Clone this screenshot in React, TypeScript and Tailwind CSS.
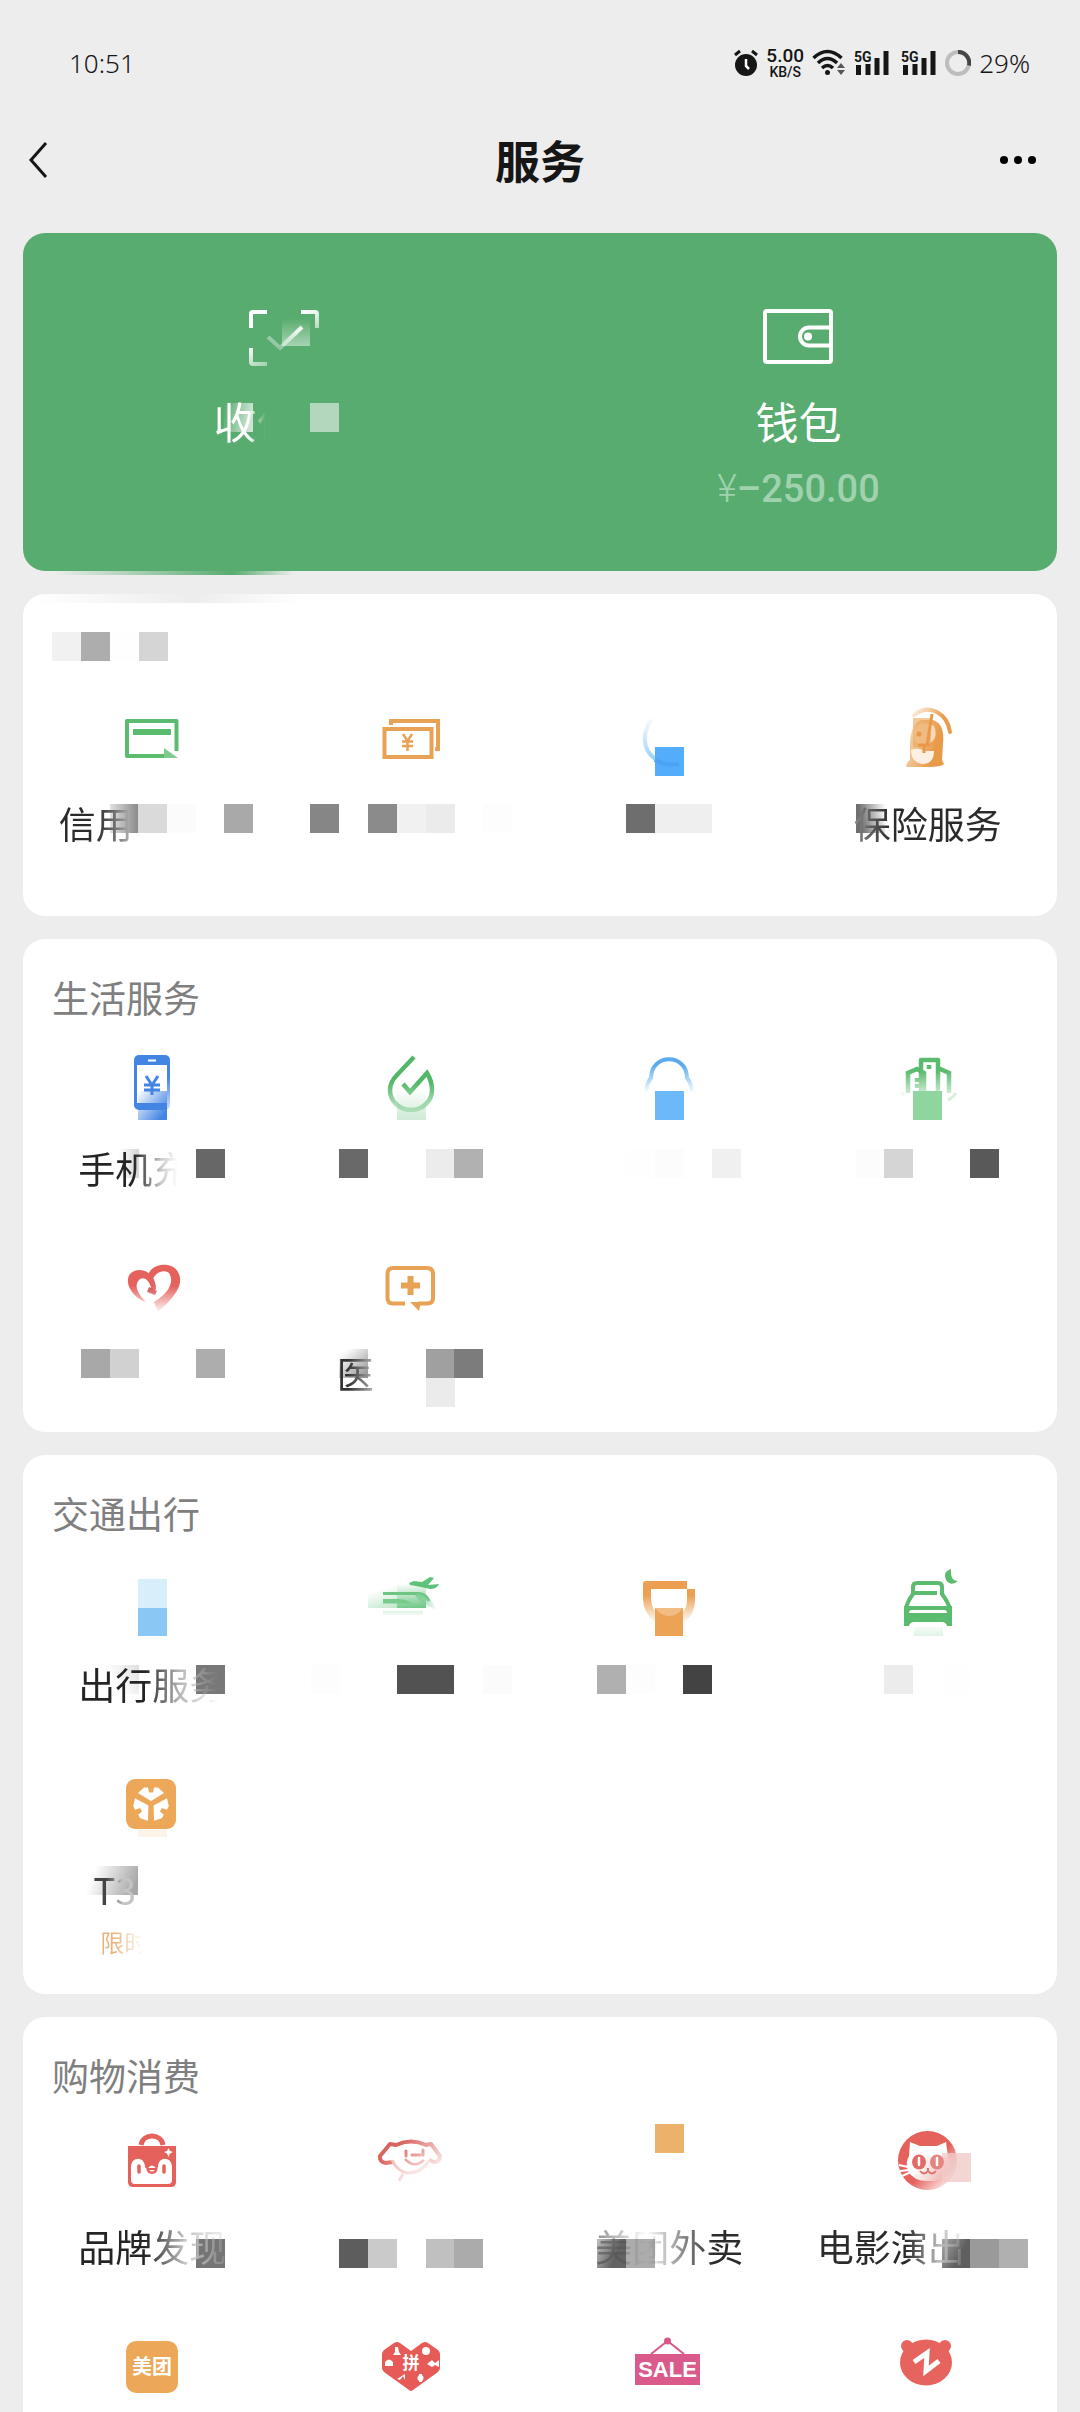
import type { ReactNode } from "react";

/**
 * Services page: status bar, title bar, the green pay/wallet card and the
 * service sections below it. Every icon is drawn in a 96x64 box whose x = 0 is
 * the middle of its column. The square mosaic patches use that same origin.
 */
const GREEN = "#5bbb6e";
const ORANGE = "#e8a256";
const RED = "#e5615c";
const BLUE = "#4385e3";

type Tile = { x: number; y?: number; w?: number; h?: number; color: string; fade?: [number, number, number, number] };

type Item = {
  id: string;
  name: string;
  icon: ReactNode;
  label?: string;
  /** Width of the label box, so that a cut label keeps its left edge. */
  box?: string;
  tone?: string;
  sub?: string;
  tiles?: Tile[];
};

type SectionData = { id: string; title?: string; pad: string; items: Item[] };

/** Fades its children from (x1, y1) to nothing at (x2, y2). */
function Fade({ id, line, children }: { id: string; line: [number, number, number, number]; children: ReactNode }) {
  const [x1, y1, x2, y2] = line;
  return (
    <>
      <linearGradient id={`${id}-g`} gradientUnits="userSpaceOnUse" x1={x1} y1={y1} x2={x2} y2={y2}>
        <stop offset="0" stopColor="#fff" />
        <stop offset="1" stopColor="#000" />
      </linearGradient>
      <mask id={id} maskUnits="userSpaceOnUse" x={-130} y={-20} width={260} height={120}>
        <rect x={-130} y={-20} width={260} height={120} fill={`url(#${id}-g)`} />
      </mask>
      <g mask={`url(#${id})`}>{children}</g>
    </>
  );
}

function Block({ x, y, w = 29, h = 29, color }: { x: number; y: number; w?: number; h?: number; color: string }) {
  return <rect x={x} y={y} width={w} height={h} fill={color} shapeRendering="crispEdges" />;
}

function Mosaic({ id, tiles }: { id: string; tiles: Tile[] }) {
  return (
    <svg
      className="absolute left-1/2 -translate-x-1/2 overflow-visible"
      width="258"
      height="48"
      viewBox="-129 0 258 48"
      aria-hidden="true"
    >
      {tiles.map((t, i) => {
        const block = <Block key={i} x={t.x} y={t.y ?? 3} w={t.w} h={t.h} color={t.color} />;
        return t.fade ? (
          <Fade key={i} id={`${id}-${i}`} line={t.fade}>
            {block}
          </Fade>
        ) : (
          block
        );
      })}
    </svg>
  );
}

/* ---------- icons ---------- */

const creditCard = (
  <>
    <path d="M24.5 45V15H-25V50H14" fill="none" stroke={GREEN} strokeWidth="4" strokeLinejoin="round" />
    <path d="M-19 26H19" stroke={GREEN} strokeWidth="6" />
    <path d="M12 42L26 52H12Z" fill="#7fcb8d" />
  </>
);

const cash = (
  <g fill="none" stroke={ORANGE}>
    <path d="M-20 19V15H27V43H24" strokeWidth="4" />
    <rect x="-26.500" y="23" width="47" height="28" strokeWidth="4" />
    <path d="M-8 28L-3.500 35L1 28M-3.500 35V45M-9 35.500H2M-9 40H2" strokeWidth="2.500" />
  </g>
);

const loan = (
  <>
    <Fade id="loan" line={[0, 70, -14, 8]}>
      <path d="M-18 13L-21 19Q-30 40 -14 53Q-4 60 10 58" fill="none" stroke="#6fbcf9" strokeWidth="4" />
    </Fade>
    <Block x={-14} y={41} color="#54adfa" />
    <path d="M-14 54Q-4 60 10 58" fill="none" stroke="#4aa3f4" strokeWidth="4" />
  </>
);

const insurance = (
  <>
    <Fade id="umbrella" line={[8, 20, -18, 0]}>
      <path d="M-14 9Q-3 0 9 6Q20 12 22 26" fill="none" stroke="#ea9c4c" strokeWidth="4" strokeLinecap="round" />
    </Fade>
    <Fade id="penguin" line={[8, 40, -44, 26]}>
      <path d="M5 14C15 17 16 28 15 38L14 54L16 58Q14 61 0 61H-22Q-22 57 -18 54V40Q-18 20 -8 14Z" fill="#e89a48" />
    </Fade>
    <path d="M-15 27C-14 16 0 16 6 20C10 30 7 37 -6 40Q-15 36 -15 27Z" fill="#f6d9ba" />
    <path d="M-17 44Q-9 41 -4 45H6Q6 58 -6 58Q-17 56 -17 44Z" fill="#fdf0e2" />
    <Block x={-15} y={12} w={18} color="#eda75b99" />
    <path d="M4 8L-1 40M-10 39H2M-4 40V47" fill="none" stroke="#e8994a" strokeWidth="3" />
    <circle cx="-9" cy="28" r="2.500" fill="#e8994a" />
  </>
);

const phone = (
  <>
    <rect x="-18" y="4" width="36" height="55" rx="5" fill={BLUE} />
    <rect x="-15" y="14" width="30" height="38" fill="#fff" />
    <path d="M-4 9.500H4" stroke="#fff" strokeWidth="2" />
    <path d="M-6 25L0 34L6 25M0 34V44M-8 34H8M-8 39H8" fill="none" stroke={BLUE} strokeWidth="3" />
    <Fade id="phone" line={[15, 60, -12, 38]}>
      <Block x={-14} y={40} color={BLUE} />
    </Fade>
    <Fade id="phone-side" line={[0, 70, 0, 26]}>
      <path d="M17 26V59" stroke="#fff" strokeWidth="4" />
    </Fade>
  </>
);

const utilities = (
  <>
    <Fade id="drop-tile" line={[0, 66, 0, 38]}>
      <Block x={-14} y={40} color="#d0ecd8" />
    </Fade>
    <Fade id="drop" line={[0, 32, 0, 74]}>
      <path
        d="M3 6L-14 24Q-21 31 -21 39A21 20 0 0 0 21 39Q21 30 16 22L-1 41L-8 33"
        fill="none"
        stroke="#53b869"
        strokeWidth="4.500"
      />
    </Fade>
  </>
);

const qcoin = (
  <>
    <Fade id="coin" line={[0, 14, 0, 42]}>
      <path d="M-23 42Q-22 31 -18 27C-18 2 18 2 18 27Q22 31 23 42" fill="none" stroke="#5aabee" strokeWidth="4" />
    </Fade>
    <Block x={-14} y={40} color="#6cb8f9" />
  </>
);

const city = (
  <>
    <Fade id="city" line={[0, 20, 0, 52]}>
      <g fill="none" stroke={GREEN} strokeWidth="4.500">
        <path d="M-7 46V9H10V46" strokeLinejoin="round" />
        <path d="M-20 42V22L-11 18L-4 22V44M10 17L21 22V42" />
        <path d="M1 14V18M-11 27V31M-11 33V37" />
      </g>
    </Fade>
    <Block x={-15} y={40} color="#8ed5a0" />
    <path d="M-27 41L-24 45" fill="none" stroke="#eef9f1" strokeWidth="3" />
    <path d="M20 49Q25 47 28 42" fill="none" stroke="#d8f0de" strokeWidth="3" />
  </>
);

const charity = (
  <Fade id="charity" line={[0, 30, 0, 58]}>
    <g fill={RED}>
      <path d="M-6 46C-26 39 -31 15 -13 14C-2 14 4 23 4 33L0 37C-1 25 -7 20 -12 23C-19 29 -14 38 -6 46Z" />
      <path d="M-4 19C0 7 20 5 26 16C34 30 18 45 6 56L2 46C16 38 23 26 17 17C12 13 3 15 -1 27Z" />
      <path d="M-3 31L5 35L3 39L-5 36Z" fill="#d04b4b" />
    </g>
  </Fade>
);

const medical = (
  <>
    <path
      d="M-6 47.500H-18Q-23.500 47.500 -23.500 42V18Q-23.500 12 -18 12H16Q22 12 22 18V42Q22 47.500 16 47.500H7"
      fill="none"
      stroke={ORANGE}
      strokeWidth="4"
    />
    <path d="M-1 46H10L8 55Z" fill={ORANGE} />
    <path d="M-10 29.500H9M-.500 20V39" stroke={ORANGE} strokeWidth="6" />
  </>
);

const travel = (
  <>
    <Block x={-14} y={12} color="#d9eefb" />
    <Block x={-14} y={41} h={28} color="#8ac7f4" />
  </>
);

const flight = (
  <>
    <Fade id="flight-a" line={[0, 48, -10, 16]}>
      <Block x={-43} y={12} color="#9edbae" />
    </Fade>
    <Fade id="flight-b" line={[0, 42, -2, 16]}>
      <Block x={-14} y={12} color="#6cc684" />
    </Fade>
    <path d="M-2 16L3 14L11 15L19 10L23 11L17 18L28 17Q26 22 19 22L10 20L-1 18Z" fill="#5fc27a" />
    <path d="M-28 26.500H8Q15 27 18 34" fill="none" stroke="#6dc583" strokeWidth="3" />
    <path d="M-28 32H-14Q-4 32 1 36.500H-28Z" fill="#78cb8c" />
    <Fade id="flight-d" line={[4, 30, 26, 42]}>
      <path d="M4 28Q10 36 15 38L27 44Q18 28 8 26Z" fill="#7ccc90" />
    </Fade>
    <Fade id="flight-c" line={[0, 38, 0, 50]}>
      <path d="M-28 46H12" stroke="#bfe6c9" strokeWidth="4" />
    </Fade>
  </>
);

const ticket = (
  <>
    <Fade id="ticket" line={[0, 28, 0, 56]}>
      <path d="M-22 22V32Q-22 44 -10 54M22 22V34Q22 44 12 54" fill="none" stroke="#eb9f50" strokeWidth="8" />
    </Fade>
    <path d="M-26 22V17Q-26 14 -23 14H18V22Z" fill="#ec9f50" />
    <Block x={-14} y={41} w={28} h={28} color="#eca355" />
    <path d="M-14 41H14Q8 49 0 49T-14 41Z" fill="#f1bd85" />
  </>
);

const hotel = (
  <>
    <path d="M23 2Q14 5 18 13Q23 20 30 14Q22 14 23 2Z" fill={GREEN} />
    <path
      d="M-22 42Q-21 35 -15 27V20Q-15 16 -11 16H10Q14 16 14 20V27Q20 35 22 42M-15 26H9"
      fill="none"
      stroke={GREEN}
      strokeWidth="4"
    />
    <path
      d="M-24 39H24V59H19Q18 55 14 55H-14Q-18 55 -19 59H-24ZM-19 46H19Q19 43 16 43H-16Q-19 43 -19 46Z"
      fill={GREEN}
      fillRule="evenodd"
    />
    <Fade id="hotel" line={[0, 76, 0, 56]}>
      <Block x={-14} y={60} h={9} color="#cfeeda" />
    </Fade>
  </>
);

const petal = "M-1 29L-14 21L-8 15.500H-4L-3 20.500H1L2 15.500H6L12 21Z";
const t3 = (
  <>
    <rect x="-26" y="7" width="50" height="50" rx="9" fill="#eca858" />
    <g fill="#fff">
      <path d={petal} />
      <path d={petal} transform="rotate(120 -1 32)" />
      <path d={petal} transform="rotate(240 -1 32)" />
    </g>
    <Block x={-14} y={58} h={7} color="#fdf3e9" />
  </>
);

const bag = (
  <>
    <path d="M-11 16C-9 4 9 4 11 16" fill="none" stroke={RED} strokeWidth="5" />
    <path d="M-24 17H24V53Q24 58 19 58H-19Q-24 58 -24 53Z" fill={RED} />
    <path
      d="M-21 38C-21 27 -7 27 -7 38L-4 41Q0 45 4 41L6 38C6 27 20 27 20 38V51Q20 55 16 55H-17Q-21 55 -21 51Z"
      fill="#fff"
    />
    <ellipse cx="0" cy="40" rx="5.500" ry="5" fill={RED} />
    <path d="M-4 39Q0 34 4 39ZM-3 41H3Q0 44 -3 41Z" fill="#fff" />
    <path d="M-13 37V43M12 37V43" stroke={RED} strokeWidth="3.500" strokeLinecap="round" />
    <path d="M16.500 19L18 22L21 23L18 24.500L16.500 28L15 24.500L12 23L15 22Z" fill="#fff" />
  </>
);

const dog = (
  <Fade id="dog" line={[-10, 14, 22, 50]}>
    <path
      d="M-18 33L-25 34Q-32 33 -31 27L-21 15L-15 16Q0 9 15 16L20 15L29 27Q29 33 23 33L18 31"
      fill="none"
      stroke="#da6460"
      strokeWidth="4"
      strokeLinejoin="round"
    />
    <path d="M18 31Q12 44 -4 44Q-14 42 -19 31M-8 45L-12 52" fill="none" stroke="#efb3b0" strokeWidth="3" />
    <path d="M-6 30Q3 40 13 31" fill="none" stroke="#e2706c" strokeWidth="2.500" />
    <path d="M-5 22V27M12 21V26M1 26H9" stroke="#da6460" strokeWidth="3" strokeLinecap="round" />
  </Fade>
);

const takeaway = <Block x={-14} y={-5} color="#ecb26c" />;

const cat = (
  <>
    <Fade id="cat" line={[4, 34, 26, 56]}>
      <circle cx="-.500" cy="31.500" r="29.500" fill={RED} />
    </Fade>
    <path d="M-18 13L-8 17H9L18 13L20 28Q24 36 19 42Q12 53 0 52Q-15 52 -20 42Q-23 34 -19 27Z" fill="#fff" />
    <path d="M-29 36L-20 38M-28 42L-19 41M-26 47L-17 43" stroke="#fff" strokeWidth="2" />
    <Fade id="cat-shade" line={[18, 56, -10, 36]}>
      <path d="M20 28Q24 36 19 42Q12 53 0 52Q-15 52 -20 42V28Z" fill="#eba5a1" />
    </Fade>
    <Block x={14} y={24} color="#f0cbc9cc" />
    <ellipse cx="-9" cy="33" rx="7" ry="7.500" fill="#e36a66" />
    <ellipse cx="9" cy="33" rx="7" ry="7.500" fill="#e58481" />
    <path d="M-9 29V36M9 29V36" stroke="#fff" strokeWidth="2.500" strokeLinecap="round" />
    <path d="M-8 42Q-4 47 0 42Q4 47 8 42M0 39V42" fill="none" stroke="#e0726e" strokeWidth="2" />
  </>
);

const meituan = (
  <>
    <rect x="-26" y="7" width="52" height="52" rx="10" fill="#eca758" />
    <text x="0" y="40" textAnchor="middle" fontSize="20" fontWeight="700" fill="#fff">
      美团
    </text>
  </>
);

const pinduoduo = (
  <>
    <path
      d="M-27 16L-17 9Q-14 7 -11 9L0 17L11 9Q14 7 17 9L27 16Q29 18 29 20V34Q29 36 27 38L2 56Q0 58 -2 56L-27 38Q-29 36 -29 34V20Q-29 18 -27 16Z"
      fill="#e65b57"
    />
    <text x="0" y="35" textAnchor="middle" fontSize="17" fontWeight="700" fill="#fff">
      拼
    </text>
    <g fill="#fff">
      <path d="M-16 13H-13L-12 18L-10 21H-18L-16 18ZM-26 32V28Q-22 23 -18 28V32ZM16 30L21 26L24 29L28 26V33L24 31L21 33ZM-14 45L-6 40V46L-8 42L-11 46Z" />
      <circle cx="15" cy="17" r="4" />
      <path d="M8 40H11V48H8Z" />
      <circle cx="9.500" cy="44" r="3" />
    </g>
  </>
);

const sale = (
  <>
    <path d="M-18 20L-1.500 7L15 20" fill="none" stroke="#d9588c" strokeWidth="2" />
    <circle cx="-1.500" cy="7" r="3.500" fill="#d9588c" />
    <rect x="-34" y="20" width="65" height="31" fill="#db5a8c" />
    <text
      x="-1.500"
      y="43"
      textAnchor="middle"
      fontSize="22"
      fontWeight="700"
      fill="#fff"
      className="font-['Liberation_Sans',sans-serif]"
    >
      SALE
    </text>
  </>
);

const bear = (
  <>
    <ellipse cx="-2" cy="28.500" rx="26" ry="23" fill="#e6645d" />
    <circle cx="-21" cy="12" r="6" fill="#e6645d" />
    <circle cx="17" cy="12" r="6" fill="#e6645d" />
    <path d="M-14 28L-1 19L-2 37L11 27" fill="none" stroke="#fff" strokeWidth="5" />
  </>
);

/* ---------- data ---------- */

const SECTIONS: SectionData[] = [
  {
    id: "finance",
    pad: "pb-[67px]",
    items: [
      {
        id: "credit",
        name: "信用",
        icon: creditCard,
        label: "信用",
        box: "w-[187px]",
        tone: "from-[#2b2b2b] from-50% to-[#bbbbbb]",
        tiles: [
          { x: -42, color: "#8a8a8a", fade: [-14, 0, -52, 0] },
          { x: -14, color: "#dadada" },
          { x: 15, color: "#fbfbfb" },
          { x: 72, color: "#a9a9a9" },
        ],
      },
      {
        id: "cash",
        name: "现金",
        icon: cash,
        tiles: [
          { x: -101, color: "#868686" },
          { x: -43, color: "#8b8b8b" },
          { x: -14, color: "#f1f1f1" },
          { x: 15, color: "#ebebeb" },
          { x: 72, color: "#fdfdfd" },
        ],
      },
      {
        id: "loan",
        name: "理财",
        icon: loan,
        tiles: [
          { x: -43, color: "#6e6e6e" },
          { x: -14, w: 57, color: "#efefef" },
        ],
      },
      {
        id: "insurance",
        name: "保险服务",
        icon: insurance,
        label: "保险服务",
        box: "w-[148px]",
        tone: "from-[#8a8a8a] via-[#2b2b2b] via-25% to-[#2b2b2b]",
        tiles: [{ x: -72, color: "#6f6f6f", fade: [-70, 4, -43, 0] }],
      },
    ],
  },
  {
    id: "life",
    title: "生活服务",
    pad: "pb-[33px]",
    items: [
      {
        id: "phone",
        name: "手机",
        icon: phone,
        label: "手机充",
        box: "w-[148px]",
        tone: "from-[#242424] from-50% via-[#cccccc] via-75% to-white to-90%",
        tiles: [
          { x: -42, color: "#d8d8d8", fade: [-14, 0, -34, 0] },
          { x: 44, color: "#676767" },
        ],
      },
      {
        id: "utilities",
        name: "缴费",
        icon: utilities,
        tiles: [
          { x: -72, color: "#696969" },
          { x: 15, color: "#ececec" },
          { x: 43, color: "#b1b1b1" },
        ],
      },
      {
        id: "qcoin",
        name: "充值",
        icon: qcoin,
        tiles: [
          { x: -43, color: "#fefefe" },
          { x: -14, color: "#fcfcfc" },
          { x: 43, color: "#f0f0f0" },
        ],
      },
      {
        id: "city",
        name: "城市",
        icon: city,
        tiles: [
          { x: -72, color: "#fcfcfc" },
          { x: -44, color: "#d5d5d5" },
          { x: 42, color: "#595959" },
        ],
      },
      {
        id: "charity",
        name: "公益",
        icon: charity,
        tiles: [
          { x: -71, y: -2, color: "#a8a8a8" },
          { x: -42, y: -2, color: "#d1d1d1" },
          { x: 44, y: -2, color: "#adadad" },
        ],
      },
      {
        id: "medical",
        name: "医",
        icon: medical,
        label: "医",
        box: "w-[148px]",
        tone: "from-[#333333] from-30% to-[#b5b5b5]",
        tiles: [
          { x: -72, y: -2, color: "#8c8c8c", fade: [-43, 27, -66, 0] },
          { x: 15, y: -2, color: "#a0a0a0" },
          { x: 43, y: -2, color: "#7c7c7c" },
          { x: 15, y: 27, color: "#ebebeb" },
        ],
      },
    ],
  },
  {
    id: "transport",
    title: "交通出行",
    pad: "pb-9",
    items: [
      {
        id: "travel",
        name: "出行服务",
        icon: travel,
        label: "出行服务",
        box: "w-[148px]",
        tone: "from-[#242424] from-45% via-[#b4b4b4] via-68% to-[#ffffff00] to-95%",
        tiles: [
          { x: -42, color: "#dedede", fade: [-14, 0, -40, 16] },
          { x: 44, color: "#787878" },
        ],
      },
      {
        id: "flight",
        name: "机票",
        icon: flight,
        tiles: [
          { x: -100, color: "#fdfdfd" },
          { x: -14, w: 57, color: "#525252" },
          { x: 72, color: "#fbfbfb" },
        ],
      },
      {
        id: "ticket",
        name: "车票",
        icon: ticket,
        tiles: [
          { x: -72, color: "#b0b0b0" },
          { x: -43, color: "#fdfdfd" },
          { x: 14, color: "#434343" },
        ],
      },
      {
        id: "hotel",
        name: "酒店",
        icon: hotel,
        tiles: [
          { x: -44, color: "#ececec" },
          { x: 14, color: "#fefefe" },
        ],
      },
      {
        id: "t3",
        name: "T3",
        icon: t3,
        label: "T3",
        box: "w-[118px]",
        tone: "from-[#444444] from-30% to-[#c4c4c4] to-70%",
        sub: "限时",
        tiles: [{ x: -66, y: -1, w: 52, color: "#a6a6a6", fade: [-16, 20, -58, 4] }],
      },
    ],
  },
  {
    id: "shopping",
    title: "购物消费",
    pad: "pb-[33px]",
    items: [
      {
        id: "brands",
        name: "品牌发现",
        icon: bag,
        label: "品牌发现",
        box: "w-[148px]",
        tone: "from-[#242424] from-45% via-[#c4c4c4] via-72% to-[#c4c4c433]",
        tiles: [{ x: 44, y: 15, color: "#757575" }],
      },
      {
        id: "dog",
        name: "购物",
        icon: dog,
        tiles: [
          { x: -72, y: 15, color: "#5d5d5d" },
          { x: -43, y: 15, color: "#cacaca" },
          { x: 15, y: 15, color: "#c0c0c0" },
          { x: 43, y: 15, color: "#ababab" },
        ],
      },
      {
        id: "takeaway",
        name: "外卖",
        icon: takeaway,
        label: "美团外卖",
        box: "w-[148px]",
        tone: "from-[#44444499] via-[#ffffff00] via-35% to-[#2b2b2b] to-80%",
        tiles: [
          { x: -72, y: 15, color: "#636363", fade: [-50, 24, -86, 8] },
          { x: -43, y: 15, color: "#acacac" },
        ],
      },
      {
        id: "movies",
        name: "电影演出",
        icon: cat,
        label: "电影演出",
        box: "w-[222px]",
        tone: "from-[#2b2b2b] from-60% via-[#bbbbbb] via-82% to-[#bdbdbd22]",
        tiles: [
          { x: 14, y: 15, color: "#5f5f5f", fade: [36, 24, -10, 0] },
          { x: 42, y: 15, color: "#9a9a9a" },
          { x: 71, y: 15, color: "#b0b0b0" },
        ],
      },
      { id: "meituan", name: "美团", icon: meituan },
      { id: "pdd", name: "拼", icon: pinduoduo },
      { id: "sale", name: "SALE", icon: sale },
      { id: "bear", name: "转转", icon: bear },
    ],
  },
];

/* ---------- pieces ---------- */

function Signal() {
  return (
    <svg width="36" height="28" viewBox="0 0 36 28" className="overflow-visible" aria-hidden="true">
      <text x="0" y="13" fontSize="14" fontWeight="700" className="font-['Roboto',sans-serif]" fill="#161616">
        5G
      </text>
      <path d="M4.500 16V26M14 15V26M23 9V26M32 2V26" stroke="#161616" strokeWidth="5" />
    </svg>
  );
}

function StatusBar() {
  return (
    <div className="flex h-[126px] items-center justify-between pr-[50px] pl-[69px] font-['Noto_Sans',sans-serif] text-[26px] text-[#161616]">
      <time className="font-light">10:51</time>
      <div className="flex items-center gap-2">
        <svg width="24" height="28" viewBox="0 0 24 28" aria-label="闹钟">
          <circle cx="12" cy="16" r="11" fill="#161616" />
          <path d="M1 6L6 2M23 6L18 2" stroke="#161616" strokeWidth="3" />
          <path d="M12 10V17L15 20" fill="none" stroke="#fff" strokeWidth="2.500" />
        </svg>
        <div className="flex w-[38px] flex-col items-center font-['Roboto',sans-serif] font-medium">
          <span className="text-[19px] leading-[18px]">5.00</span>
          <span className="text-sm leading-[14px]">KB/S</span>
        </div>
        <svg width="34" height="28" viewBox="0 0 34 28" aria-label="无线网络">
          <g fill="none" stroke="#161616" strokeWidth="3.500">
            <path d="M1.500 9Q15.500 -4 29.500 9" />
            <path d="M6 14Q15.500 5 25 14" />
            <path d="M10 19Q15.500 14 21 19" />
          </g>
          <circle cx="15.500" cy="23.500" r="2.500" fill="#161616" />
          <path d="M29 14L33 19H25ZM29 26L33 21H25Z" fill="#555" />
        </svg>
        <div className="flex items-center gap-[11px]">
          <Signal />
          <Signal />
        </div>
        <svg width="26" height="26" viewBox="0 0 26 26" aria-label="电量">
          <circle cx="13" cy="13" r="11" fill="none" stroke="#bdbdbd" strokeWidth="4" />
          <path d="M13 2A11 11 0 0 1 24 15.500" fill="none" stroke="#444" strokeWidth="4" />
        </svg>
        <span className="font-light">29%</span>
      </div>
    </div>
  );
}

function PayCard() {
  return (
    <section className="relative grid h-[338px] grid-cols-2 rounded-[22px] bg-[#58ac6f] text-white">
      <button type="button" aria-label="收付款" className="flex flex-col items-center pt-[73px]">
        <svg width="96" height="64" viewBox="-48 0 96 64" className="overflow-visible" aria-hidden="true">
          <Fade id="pay-tile" line={[0, 64, 0, 12]}>
            <Block x={0} y={11} w={28} color="#e9f5ec" />
          </Fade>
          <Fade id="pay-icon" line={[-10, 26, 14, 66]}>
            <path
              d="M-31 22V8Q-31 6 -29 6H-15M19 6H33Q35 6 35 8V22M-31 42V56Q-31 58 -29 58H-15"
              fill="none"
              stroke="#fff"
              strokeWidth="4"
            />
          </Fade>
          <Fade id="pay-check" line={[18, 18, -10, 56]}>
            <path d="M-14 31L-2 42L20 21" fill="none" stroke="#fff" strokeWidth="4" />
          </Fade>
        </svg>
        <span className="relative mt-6 flex h-14 w-full justify-center">
          <Mosaic
            id="pay"
            tiles={[
              { x: -58, y: 9, color: "#cde5d4", fade: [-30, 20, -58, 14] },
              { x: 28, y: 9, color: "#b2d7bd" },
            ]}
          />
          <span className="relative w-[136px] text-left text-[43px] leading-[52px]">
            <span className="bg-linear-to-r from-white from-40% to-[#58ac6f] to-60% bg-clip-text text-transparent">
              收付
            </span>
          </span>
        </span>
      </button>
      <button type="button" className="flex flex-col items-center pt-[73px]">
        <svg width="96" height="64" viewBox="-48 0 96 64" aria-hidden="true">
          <g fill="none" stroke="#fff" strokeWidth="4">
            <rect x="-34" y="5" width="66" height="51" rx="2" />
            <path d="M32 21.500H10A9 9 0 0 0 10 39.500H32" />
          </g>
          <circle cx="9" cy="30.500" r="4" fill="#fff" />
        </svg>
        <span className="mt-6 text-[43px] leading-[52px]">钱包</span>
        <span className="mt-[19px] flex items-center font-['Roboto',sans-serif] text-[38px] leading-12 text-[#9fd2ad]">
          <span className="font-light">¥</span>
          <span className="font-medium">–250.00</span>
        </span>
      </button>
      <div className="absolute top-full left-[30px] h-1 w-[240px] bg-linear-to-r from-transparent via-[#58ac6f] via-75% to-transparent" />
    </section>
  );
}

function ServiceItem({ item }: { item: Item }) {
  return (
    <button type="button" aria-label={item.name} className="flex flex-col items-center">
      <svg width="96" height="64" viewBox="-48 0 96 64" className="overflow-visible" aria-hidden="true">
        {item.icon}
      </svg>
      <span className="relative mt-[31px] flex h-12 w-full justify-center">
        {item.tiles && <Mosaic id={item.id} tiles={item.tiles} />}
        {item.label && (
          <span className={`relative text-left text-[37px] leading-11 ${item.box}`}>
            <span className={`bg-linear-to-r bg-clip-text text-transparent ${item.tone}`}>{item.label}</span>
          </span>
        )}
      </span>
      {item.sub && (
        <span className="mt-[11px] w-[104px] text-left text-2xl leading-8">
          <span className="bg-linear-to-r from-[#e8b47c] from-30% to-white to-90% bg-clip-text text-transparent">
            {item.sub}
          </span>
        </span>
      )}
    </button>
  );
}

function Section({ section }: { section: SectionData }) {
  return (
    <section className={`relative rounded-[22px] bg-white pt-[35px] ${section.pad}`}>
      {section.title ? (
        <h2 className="mb-[31px] px-[29px] text-[37px] leading-[46px] text-[#7f7f7f]">{section.title}</h2>
      ) : (
        <>
          <div className="absolute top-0 left-2 h-[9px] w-[270px] bg-linear-to-r from-transparent via-[#ededed] via-60% to-transparent" />
          <div className="mb-[29px] flex h-12 px-[29px] pt-[3px]">
            <span className="size-[29px] bg-[#f1f1f1]" />
            <span className="size-[29px] bg-[#adadad]" />
            <span className="size-[29px] bg-[#fefefe]" />
            <span className="size-[29px] bg-[#d5d5d5]" />
          </div>
        </>
      )}
      <div className="grid grid-cols-4 items-start gap-y-[62px]">
        {section.items.map((item) => (
          <ServiceItem key={item.id} item={item} />
        ))}
      </div>
    </section>
  );
}

export default function App() {
  return (
    <div
      lang="zh-CN"
      className="h-screen overflow-hidden bg-[#ededed] font-['Noto_Sans_CJK_SC',sans-serif] text-[#161616]"
    >
      <StatusBar />
      <header className="grid h-[68px] grid-cols-[1fr_auto_1fr] items-center">
        <button type="button" aria-label="返回" className="ml-[28px] justify-self-start">
          <svg width="20" height="38" viewBox="0 0 20 38" aria-hidden="true">
            <path d="M18 2L3 19L18 36" fill="none" stroke="#161616" strokeWidth="3" />
          </svg>
        </button>
        <h1 className="text-[45px] leading-[64px] font-bold">服务</h1>
        <button type="button" aria-label="更多" className="mr-[42px] justify-self-end">
          <svg width="40" height="10" viewBox="0 0 40 10" aria-hidden="true">
            <circle cx="6" cy="5" r="4" />
            <circle cx="20" cy="5" r="4" />
            <circle cx="34" cy="5" r="4" />
          </svg>
        </button>
      </header>
      <main className="flex flex-col gap-[23px] px-[23px] pt-[39px]">
        <PayCard />
        {SECTIONS.map((section) => (
          <Section key={section.id} section={section} />
        ))}
      </main>
    </div>
  );
}
